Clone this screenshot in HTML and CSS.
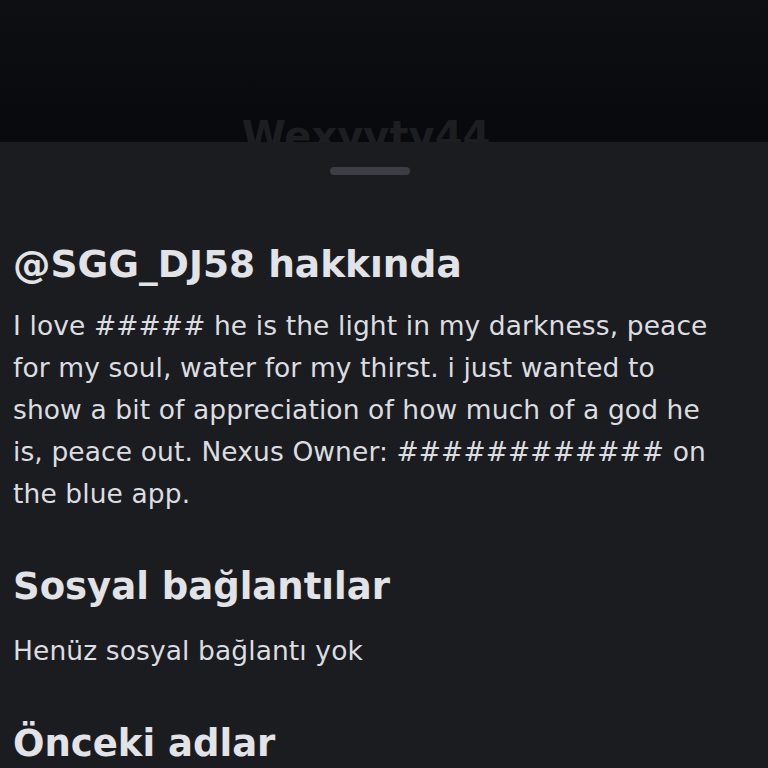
FILE: index.html
```html
<!DOCTYPE html>
<html lang="tr">
<head>
    <meta charset="UTF-8">
    <meta name="viewport" content="width=device-width, initial-scale=1">
    <title>Hakkında</title>
    <link rel="stylesheet" href="styles.css">
</head>
<body>
    <div class="backdrop">
        <div class="profile-name">Wexyyty44</div>
    </div>
    <section class="sheet">
        <div class="handle"></div>
        <h2 class="section-title about-title">@SGG_DJ58 hakkında</h2>
        <p class="about-text">I love ##### he is the light in my darkness, peace for my soul, water for my thirst. i just wanted to show a bit of appreciation of how much of a god he is, peace out. Nexus Owner: ############ on the blue app.</p>
        <h2 class="section-title">Sosyal bağlantılar</h2>
        <p class="empty-text">Henüz sosyal bağlantı yok</p>
        <h2 class="section-title">Önceki adlar</h2>
    </section>
</body>
</html>
```

FILE: styles.css
```css
body, h2, p {
    margin: 0;
    padding: 0;
    box-sizing: border-box;
}

html, body {
    height: 100%;
    overflow: hidden;
}

body {
    font-family: 'DejaVu Sans', 'Noto Sans', sans-serif;
    background-color: #0b0c0f;
    color: #e1e2e5;
}

.backdrop {
    height: 142px;
    overflow: hidden;
    display: flex;
    justify-content: center;
    align-items: flex-end;
    padding-right: 36px;
    background: linear-gradient(#0e0f13, #08090c);
}

.profile-name {
    font-size: 40px;
    font-weight: 700;
    line-height: 1;
    color: #1d1e22;
    margin-bottom: -14px;
}

.sheet {
    background-color: #1b1c20;
    min-height: 626px;
    padding: 25px 42px 0 13px;
}

.handle {
    width: 80px;
    height: 8px;
    margin: 0 auto;
    border-radius: 4px;
    background-color: #3b3e45;
}

.section-title {
    font-size: 37px;
    font-weight: 700;
    line-height: 44px;
    color: #e2e3e6;
    white-space: nowrap;
}

.about-title {
    margin-top: 67px;
    font-size: 37.5px;
}

.about-text {
    font-size: 26.5px;
    line-height: 42px;
    letter-spacing: 0.1px;
    color: #dcdde0;
    margin-top: 19px;
    margin-bottom: 50px;
}

.empty-text {
    font-size: 26.5px;
    line-height: 42px;
    letter-spacing: 0.1px;
    color: #dcdde0;
    margin-top: 21px;
    margin-bottom: 50px;
}
```
